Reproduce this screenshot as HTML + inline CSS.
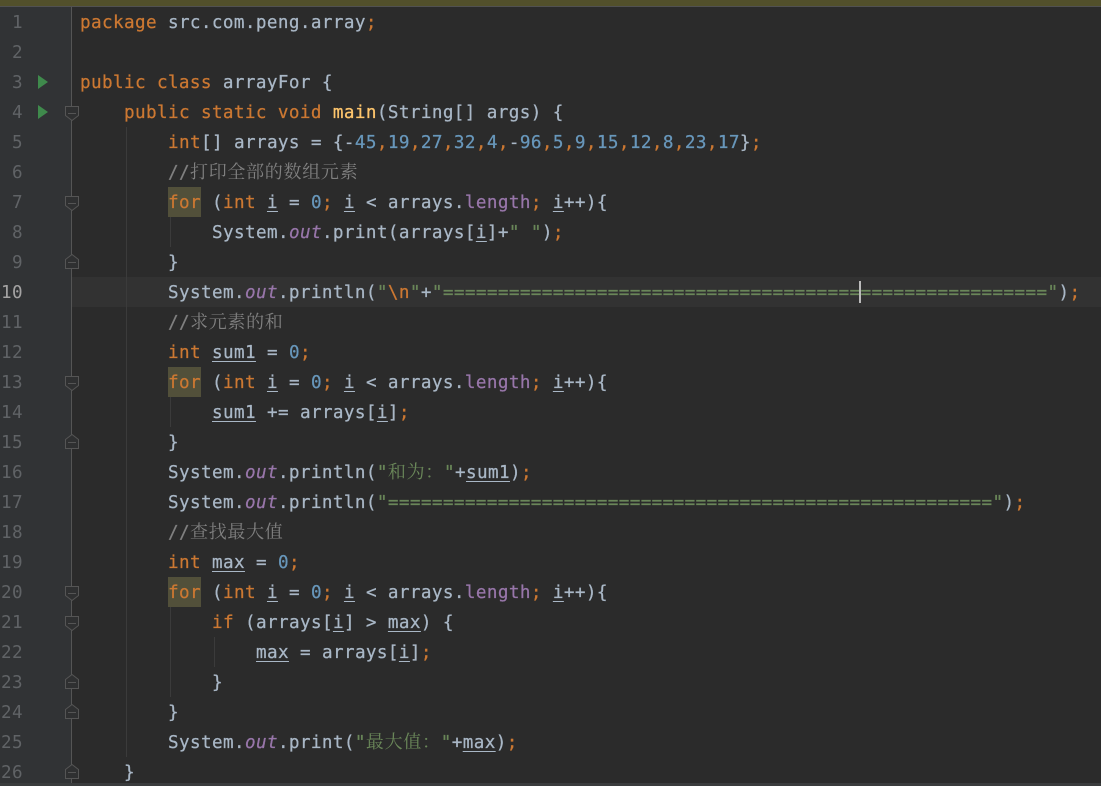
<!DOCTYPE html>
<html><head><meta charset="utf-8"><style>
html,body{margin:0;padding:0;background:#2b2b2b}
#r{position:relative;width:1101px;height:786px;overflow:hidden;background:#2b2b2b;font-family:"DejaVu Sans Mono","Liberation Mono",monospace;font-size:17.6px;letter-spacing:.4px}
.top{position:absolute;left:0;top:0;width:1101px;height:6px;background:#52502b}
.top2{position:absolute;left:0;top:6px;width:1101px;height:1px;background:#515151}
.gut{position:absolute;left:0;top:7px;width:72px;height:779px;background:#313335}
.band{position:absolute;left:72px;top:277px;width:1029px;height:30px;background:#323232}
.bot{position:absolute;left:0;top:783px;width:1101px;height:3px;background:#3a3c3d}
.v{position:absolute;width:1px;background:#3b3b3b}
.n{position:absolute;left:0;width:23px;margin-top:1px;text-align:right;height:30px;line-height:30px;color:#606366;white-space:pre}
.l{position:absolute;left:80px;margin-top:1px;height:30px;line-height:30px;color:#a9b7c6;white-space:pre;-webkit-text-stroke:.25px}
.k{color:#cc7832}.d{color:#6897bb}.f{color:#9876aa;font-style:italic}.fn{color:#9876aa}.m{color:#ffc66d}
.s{color:#6a8759}.c{color:#808080}.u{text-decoration:underline;text-underline-offset:3px;text-decoration-thickness:1px}
.z{font-family:"Noto Serif CJK SC","Noto Sans CJK SC",serif;font-size:18px;letter-spacing:.7px;line-height:0;-webkit-text-stroke:0}
.hl{background:#52503a;display:inline-block;height:30px;width:33px;vertical-align:top}
svg{position:absolute;left:0;top:0}
.car{position:absolute;left:859px;top:281px;width:2px;height:22px;background:#bbb}
</style></head><body><div id="r">
<div class="top"></div><div class="top2"></div><div class="gut"></div><div class="band"></div>
<div class="v" style="left:126px;top:127px;height:630px"></div>
<div class="v" style="left:170px;top:217px;height:30px"></div>
<div class="v" style="left:170px;top:397px;height:30px"></div>
<div class="v" style="left:170px;top:607px;height:90px"></div>
<div class="v" style="left:214px;top:637px;height:30px"></div>
<svg width="1101" height="786" fill="#2f3031" stroke="#555" stroke-width="1">
<path d="M71.5 7V786" fill="none"/>
<path id="a" d="M65.5 106.5H78.5V115.5L72 120.5L65.5 115.5Z"/><path d="M68 113.5H76"/>
<path d="M65.5 196.5H78.5V205.5L72 210.5L65.5 205.5Z"/><path d="M68 203.5H76"/>
<path d="M65.5 376.5H78.5V385.5L72 390.5L65.5 385.5Z"/><path d="M68 383.5H76"/>
<path d="M65.5 586.5H78.5V595.5L72 600.5L65.5 595.5Z"/><path d="M68 593.5H76"/>
<path d="M65.5 616.5H78.5V625.5L72 630.5L65.5 625.5Z"/><path d="M68 623.5H76"/>
<path d="M65.5 268.5H78.5V259.5L72 254.5L65.5 259.5Z"/><path d="M68 262.5H76"/>
<path d="M65.5 448.5H78.5V439.5L72 434.5L65.5 439.5Z"/><path d="M68 442.5H76"/>
<path d="M65.5 688.5H78.5V679.5L72 674.5L65.5 679.5Z"/><path d="M68 682.5H76"/>
<path d="M65.5 718.5H78.5V709.5L72 704.5L65.5 709.5Z"/><path d="M68 712.5H76"/>
<path d="M65.5 778.5H78.5V769.5L72 764.5L65.5 769.5Z"/><path d="M68 772.5H76"/>
<path d="M38 75V89L48 82Z" fill="#3f8a4c" stroke="none"/>
<path d="M38 105V119L48 112Z" fill="#3f8a4c" stroke="none"/>
</svg>
<div class="n" style="top:7px">1</div>
<div class="n" style="top:37px">2</div>
<div class="n" style="top:67px">3</div>
<div class="n" style="top:97px">4</div>
<div class="n" style="top:127px">5</div>
<div class="n" style="top:157px">6</div>
<div class="n" style="top:187px">7</div>
<div class="n" style="top:217px">8</div>
<div class="n" style="top:247px">9</div>
<div class="n" style="top:277px;color:#a4a3a3">10</div>
<div class="n" style="top:307px">11</div>
<div class="n" style="top:337px">12</div>
<div class="n" style="top:367px">13</div>
<div class="n" style="top:397px">14</div>
<div class="n" style="top:427px">15</div>
<div class="n" style="top:457px">16</div>
<div class="n" style="top:487px">17</div>
<div class="n" style="top:517px">18</div>
<div class="n" style="top:547px">19</div>
<div class="n" style="top:577px">20</div>
<div class="n" style="top:607px">21</div>
<div class="n" style="top:637px">22</div>
<div class="n" style="top:667px">23</div>
<div class="n" style="top:697px">24</div>
<div class="n" style="top:727px">25</div>
<div class="n" style="top:757px">26</div>

<div class="l" style="top:7px"><span class="k">package</span> src.com.peng.array<span class="k">;</span></div>
<div class="l" style="top:67px"><span class="k">public class</span> arrayFor {</div>
<div class="l" style="top:97px;left:124px"><span class="k">public static void</span> <span class="m">main</span>(String[] args) {</div>
<div class="l" style="top:127px;left:168px"><span class="k">int</span>[] arrays = {-<span class="d">45</span><span class="k">,</span><span class="d">19</span><span class="k">,</span><span class="d">27</span><span class="k">,</span><span class="d">32</span><span class="k">,</span><span class="d">4</span><span class="k">,</span>-<span class="d">96</span><span class="k">,</span><span class="d">5</span><span class="k">,</span><span class="d">9</span><span class="k">,</span><span class="d">15</span><span class="k">,</span><span class="d">12</span><span class="k">,</span><span class="d">8</span><span class="k">,</span><span class="d">23</span><span class="k">,</span><span class="d">17</span>}<span class="k">;</span></div>
<div class="l c" style="top:157px;left:168px">//<span class="z">打印全部的数组元素</span></div>
<div class="l" style="top:187px;left:168px"><span class="hl" style="position:absolute;left:0;top:-1px"></span><span style="position:relative"><span class="k">for</span> (<span class="k">int</span> <span class="u">i</span> = <span class="d">0</span><span class="k">;</span> <span class="u">i</span> &lt; arrays.<span class="fn">length</span><span class="k">;</span> <span class="u">i</span>++){</span></div>
<div class="l" style="top:217px;left:212px">System.<span class="f">out</span>.print(arrays[<span class="u">i</span>]+<span class="s">" "</span>)<span class="k">;</span></div>
<div class="l" style="top:247px;left:168px">}</div>
<div class="l" style="top:277px;left:168px">System.<span class="f">out</span>.println(<span class="s">"</span><span class="k">\n</span><span class="s">"</span>+<span class="s">"=======================================================</span><span class="s">"</span>)<span class="k">;</span></div>
<div class="car"></div>
<div class="l c" style="top:307px;left:168px">//<span class="z">求元素的和</span></div>
<div class="l" style="top:337px;left:168px"><span class="k">int</span> <span class="u">sum1</span> = <span class="d">0</span><span class="k">;</span></div>
<div class="l" style="top:367px;left:168px"><span class="hl" style="position:absolute;left:0;top:-1px"></span><span style="position:relative"><span class="k">for</span> (<span class="k">int</span> <span class="u">i</span> = <span class="d">0</span><span class="k">;</span> <span class="u">i</span> &lt; arrays.<span class="fn">length</span><span class="k">;</span> <span class="u">i</span>++){</span></div>
<div class="l" style="top:397px;left:212px"><span class="u">sum1</span> += arrays[<span class="u">i</span>]<span class="k">;</span></div>
<div class="l" style="top:427px;left:168px">}</div>
<div class="l" style="top:457px;left:168px">System.<span class="f">out</span>.println(<span class="s">"<span class="z">和为：</span>"</span>+<span class="u">sum1</span>)<span class="k">;</span></div>
<div class="l" style="top:487px;left:168px">System.<span class="f">out</span>.println(<span class="s">"=======================================================</span><span class="s">"</span>)<span class="k">;</span></div>
<div class="l c" style="top:517px;left:168px">//<span class="z">查找最大值</span></div>
<div class="l" style="top:547px;left:168px"><span class="k">int</span> <span class="u">max</span> = <span class="d">0</span><span class="k">;</span></div>
<div class="l" style="top:577px;left:168px"><span class="hl" style="position:absolute;left:0;top:-1px"></span><span style="position:relative"><span class="k">for</span> (<span class="k">int</span> <span class="u">i</span> = <span class="d">0</span><span class="k">;</span> <span class="u">i</span> &lt; arrays.<span class="fn">length</span><span class="k">;</span> <span class="u">i</span>++){</span></div>
<div class="l" style="top:607px;left:212px"><span class="k">if</span> (arrays[<span class="u">i</span>] &gt; <span class="u">max</span>) {</div>
<div class="l" style="top:637px;left:256px"><span class="u">max</span> = arrays[<span class="u">i</span>]<span class="k">;</span></div>
<div class="l" style="top:667px;left:212px">}</div>
<div class="l" style="top:697px;left:168px">}</div>
<div class="l" style="top:727px;left:168px">System.<span class="f">out</span>.print(<span class="s">"<span class="z">最大值：</span>"</span>+<span class="u">max</span>)<span class="k">;</span></div>
<div class="l" style="top:757px;left:124px">}</div>
<div class="bot"></div>
</div></body></html>
